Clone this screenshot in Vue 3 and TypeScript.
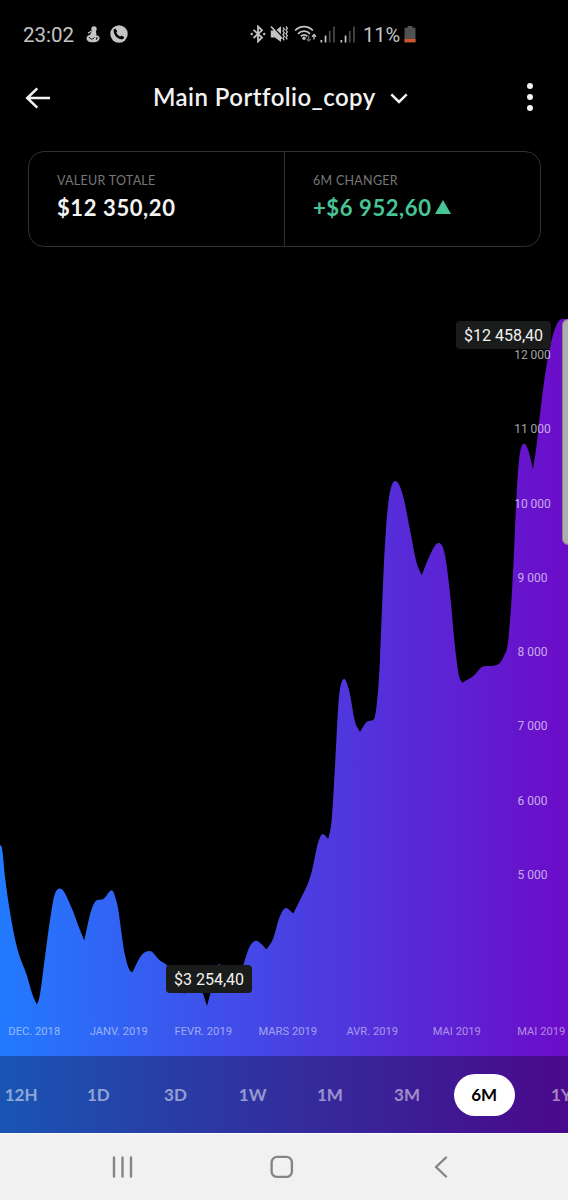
<script setup lang="ts">
type Point = [number, number]

// Portfolio value curve, split at its sharp lows so that each run is smoothed on its own.
const runs: Point[][] = [
  [[0, 845], [1.7, 847], [5, 877], [10, 912], [16.7, 946], [26.7, 975], [33, 996], [37, 1004.5]],
  [[37, 1004.5], [39.5, 997], [43.3, 970], [50, 920], [54.5, 895], [60, 888.5], [71.7, 908], [80, 930], [84.2, 940.5]],
  [[84.2, 940.5], [91.7, 909], [96.7, 900.3], [103.3, 899], [111.7, 890.2], [116.7, 902], [125, 955], [129, 969], [132.3, 972.5]],
  [[132.3, 972.5], [141.7, 955], [149.7, 951], [160, 960.5], [166.7, 965], [184.5, 993.5], [192, 980], [202, 991], [207, 1006]],
  [[207, 1006], [211, 991], [219, 964], [231, 992], [235, 992], [243.3, 965], [249, 948], [256, 940.7], [266.7, 949.3]],
  [[266.7, 949.3], [273, 939], [280, 916], [285.7, 908], [293.3, 913.5]],
  [[293.3, 913.5], [300, 900], [311.7, 871.7], [318.3, 842], [322.5, 834], [328.3, 839]],
  [[328.3, 839], [331.7, 820], [335, 766.7], [339.3, 694], [344.3, 679], [349, 690], [355, 721.7], [360, 732]],
  [[360, 732], [367.3, 721.5], [373.3, 720], [376.7, 705], [380, 660], [383.3, 577], [388.3, 503], [395.5, 481], [403.3, 496.7], [410, 530], [416.7, 563], [421.7, 575.2]],
  [[421.7, 575.2], [430, 555], [438.3, 543], [444.3, 552], [450, 593], [455, 646.7], [459.3, 677], [462.5, 682.7]],
  [[462.5, 682.7], [473.3, 676], [483.3, 666.4], [493.3, 665.8], [504, 656], [508.3, 640], [511.7, 597], [514, 552], [516.7, 493], [520.5, 450], [524.5, 443.7], [528.5, 451], [533, 469.5]],
  [[533, 469.5], [536.7, 444], [541.7, 400], [550, 347], [556, 326], [562, 319], [568, 319]],
]

function smooth(points: Point[]): string {
  const widths = points.slice(1).map((p, i) => p[0] - points[i][0])
  const slopes = points.slice(1).map((p, i) => (p[1] - points[i][1]) / widths[i])
  const tangents = points.map((_, i) => {
    if (i === 0) return slopes[0]
    if (i === points.length - 1) return slopes[i - 1]
    const a = slopes[i - 1]
    const b = slopes[i]
    if (a * b <= 0) return 0
    const mean = (a * widths[i] + b * widths[i - 1]) / (widths[i] + widths[i - 1])
    const limit = 2.6 * Math.min(Math.abs(a), Math.abs(b))
    return Math.sign(mean) * Math.min(Math.abs(mean), limit)
  })
  return points.slice(1).map((p, i) => {
    const q = points[i]
    const h = widths[i] / 3
    return `C${q[0] + h} ${q[1] + h * tangents[i]} ${p[0] - h} ${p[1] - h * tangents[i + 1]} ${p[0]} ${p[1]}`
  }).join('')
}

const area = `M0 1056V845${runs.map(smooth).join('')}V1056Z`

const levels = ['12 000', '11 000', '10 000', '9 000', '8 000', '7 000', '6 000', '5 000']
const months = ['DEC. 2018', 'JANV. 2019', 'FEVR. 2019', 'MARS 2019', 'AVR. 2019', 'MAI 2019', 'MAI 2019']
const periods = ['12H', '1D', '3D', '1W', '1M', '3M', '6M', '1Y']
const active = '6M'
</script>

<template>
  <main class="screen">
    <div class="status">
      <span class="clock">23:02</span>
      <svg class="figure" width="14" height="17" viewBox="0 0 14 17">
        <circle cx="8" cy="3" r="2.700" />
        <path d="M6 5 10 5 10.500 9.500C13 9.500 13.800 11 13.500 13 12.500 15.500 10 16.500 7 16.200 3 16.300.5 14.800.5 12.200.5 10.500 2 9 4 8.800Z" />
        <path d="M2 7.300 5.500 5" stroke="#c4c4c4" stroke-width="1.200" />
        <path class="cut" d="M3 11.200c1.500 2.300 4 2.300 5.500.3M11.300 11l-1 2.800" />
      </svg>
      <svg class="call" width="18" height="18" viewBox="0 0 18 18">
        <circle cx="9" cy="9" r="8.700" />
        <path class="hole" d="M5.200 3.600 7.200 5.900 6.300 7.500c.9 2 2.100 3.100 3.900 4l1.600-1 2.400 1.800c-.6 1.600-1.700 2.300-3.100 2C7.200 13.600 4 9.800 3.600 6.200c-.1-1.200.5-2.100 1.600-2.600Z" />
      </svg>
      <svg class="bt" width="16" height="18" viewBox="0 0 16 18">
        <path class="line" d="M3.500 4.800 12 12.500 8 16.500V1.500L12 5.300 3.500 13" />
        <circle cx="1.700" cy="9" r="1.200" /><circle cx="14.200" cy="9" r="1.200" />
      </svg>
      <svg class="mute" width="18" height="18" viewBox="0 0 18 18">
        <path d="M.8 5.500H4.500L11 12V17L5 12.500H.8Z M6.500 4.800 11 1.300V9.300Z" />
        <path class="line" d="M1 1.500 12 13.500" />
        <path class="line thin" d="M13 2.500l1.300 1.800-1.300 1.800 1.300 1.800-1.300 1.900 1.300 1.800-1.300 1.800 1.300 2M16 1.500l1.300 1.800-1.300 1.800 1.300 1.800-1.300 1.900 1.300 1.800-1.300 1.800 1.300 2" />
      </svg>
      <svg class="wifi" width="24" height="18" viewBox="0 0 24 18">
        <path class="line" d="M1.200 5.500C6 .3 14 .3 18.800 5.500M4 8.800c3.300-3.500 8.800-3.500 12 0M6.800 11.300c1.900-1.900 4.600-1.900 6.500 0" />
        <circle cx="10" cy="13.200" r="1.700" />
        <path class="dim" d="M14.700 10.500v5.500m-2-2 2 2 2-2" />
        <path class="line thin" d="M20 14.500V9.500m-2 2.200 2-2.200 2 2.200" />
      </svg>
      <svg v-for="n in 2" :key="n" class="signal" width="16" height="17" viewBox="0 0 16 17">
        <path d="M.5 14H2.200V16.500H.5ZM4.700 9.500H6.400V16.500H4.700Z" />
        <path class="weak" d="M8.900 5H10.600V16.500H8.900ZM13.100.5H14.800V16.500H13.100Z" />
      </svg>
      <span class="percent">11%</span>
      <svg class="battery" width="12" height="18" viewBox="0 0 12 18">
        <path class="cell" d="M3.500 1H8.500V2.700H11.500V17.300H.5V2.700H3.500Z" />
        <path class="charge" d="M.5 14H11.500V17.300H.5Z" />
      </svg>
    </div>

    <header class="header">
      <svg class="back" width="26" height="22" viewBox="0 0 26 22">
        <path d="M12.300 1.300 2.200 11 12.300 20.700M2.200 11H25" />
      </svg>
      <h1>Main Portfolio_copy</h1>
      <svg class="chevron" width="18" height="11" viewBox="0 0 18 11"><path d="M1.300 1.300 9 9 16.700 1.300" /></svg>
      <svg class="more" width="8" height="30" viewBox="0 0 8 30">
        <circle cx="4" cy="4" r="3" /><circle cx="4" cy="15" r="3" /><circle cx="4" cy="26" r="3" />
      </svg>
    </header>

    <section class="summary">
      <div class="stat">
        <span class="label">VALEUR TOTALE</span>
        <span class="value">$12 350,20</span>
      </div>
      <div class="stat change">
        <span class="label">6M CHANGER</span>
        <span class="value gain">+$6 952,60<svg width="16" height="14" viewBox="0 0 16 14"><path d="M8 0 16 14H0Z" /></svg></span>
      </div>
    </section>

    <section class="chart">
      <svg class="plot" width="568" height="809" viewBox="0 247 568 809">
        <defs>
          <linearGradient id="fill" gradientUnits="userSpaceOnUse" x1="0" y1="0" x2="568" y2="0">
            <stop offset="0" stop-color="#227aff" />
            <stop offset=".5" stop-color="#4842e3" />
            <stop offset="1" stop-color="#6c0cc8" />
          </linearGradient>
        </defs>
        <path :d="area" fill="url(#fill)" />
      </svg>
      <div class="levels"><span v-for="level in levels" :key="level">{{ level }}</span></div>
      <div class="months"><span v-for="(month, i) in months" :key="i">{{ month }}</span></div>
      <span class="tip high">$12 458,40</span>
      <span class="tip low">$3 254,40</span>
      <i class="handle"></i>
    </section>

    <nav class="periods">
      <span v-for="period in periods" :key="period" class="slot">
        <button :class="{ active: period === active }">{{ period }}</button>
      </span>
    </nav>

    <footer class="system">
      <svg width="22" height="22" viewBox="0 0 22 22"><path d="M2 1.500V20.500M10.500 1.500V20.500M19 1.500V20.500" /></svg>
      <svg class="home" width="24" height="24" viewBox="0 0 24 24"><rect x="1.600" y="1.900" width="20.300" height="20" rx="5.500" /></svg>
      <svg width="14" height="22" viewBox="0 0 14 22"><path d="M12 1.500 2 11 12 20.500" /></svg>
    </footer>
  </main>
</template>

<style>
body { background: #000; }
</style>

<style scoped>
.screen {
  width: 568px;
  height: 1200px;
  overflow: hidden;
  display: flex;
  flex-direction: column;
  background: #000;
  color: #f3f3f3;
  font-family: Lato, "Liberation Sans", sans-serif;
}
svg { display: block; flex: none; }

.status {
  height: 68px;
  flex: none;
  box-sizing: border-box;
  display: flex;
  align-items: center;
  padding-left: 23px;
  color: #c4c4c4;
  font: 400 20.5px Roboto, sans-serif;
}
.status svg { fill: #c4c4c4; }
.status .clock { width: 63px; padding-top: 2px; }
.status .line { fill: none; stroke: #c4c4c4; stroke-width: 1.8; }
.status .thin { stroke-width: 1.3; }
.status .dim { fill: none; stroke: #666; stroke-width: 1.3; }
.status .cut { fill: none; stroke: #000; stroke-width: 1; }
.status .hole { fill: #000; }
.status .weak { fill: #4a4a4a; }
.call { margin-left: 10px; }
.bt { margin-left: 122px; }
.mute { margin-left: 4px; }
.wifi { margin-left: 6px; }
.signal { margin-left: 2px; }
.signal + .signal { margin-left: 4px; }
.percent { width: 37px; margin-left: 7px; padding-top: 2px; font-size: 20px; }
.battery { margin-left: 4px; }
.status .cell { fill: #515151; }
.status .charge { fill: #d3532e; }

.header {
  height: 60px;
  flex: none;
  display: flex;
  align-items: center;
  padding-left: 25px;
}
.header svg { fill: none; stroke: #f3f3f3; stroke-width: 2.5; }
h1 {
  width: 224px;
  margin: 0 0 2px 102px;
  font-size: 24px;
  line-height: 30px;
  font-weight: 600;
  letter-spacing: 0.45px;
  white-space: nowrap;
}
.chevron { margin-left: 13px; }
.header .more { margin: 0 0 2px 118px; fill: #f3f3f3; stroke: none; }

.summary {
  width: 513px;
  height: 96px;
  flex: none;
  box-sizing: border-box;
  margin: 23px 0 0 28px;
  display: flex;
  border: 1.5px solid #303030;
  border-radius: 16px;
}
.stat {
  width: 255px;
  box-sizing: border-box;
  padding: 20px 0 0 28px;
  display: flex;
  flex-direction: column;
}
.change { width: 256px; border-left: 1.5px solid #303030; }
.label { font-size: 12.5px; line-height: 18px; letter-spacing: 0.28px; color: #777; white-space: nowrap; }
.value {
  display: flex;
  margin-top: 5px;
  font-size: 22px;
  line-height: 26px;
  font-weight: 700;
  letter-spacing: 0.6px;
  white-space: nowrap;
}
.gain { color: #48c597; }
.gain svg { margin: 5px 0 0 3px; fill: #48c597; }

.chart { position: relative; height: 809px; flex: none; }
.levels {
  position: absolute;
  top: 71px;
  right: 0;
  width: 71px;
  color: rgb(255 255 255 / 65%);
  font: 12px Roboto, sans-serif;
  text-align: center;
}
.levels span { display: block; height: 74.3px; line-height: 74.3px; }
.months {
  position: absolute;
  left: -8px;
  bottom: 14px;
  display: flex;
  color: rgb(255 255 255 / 50%);
  font: 11.2px/20px Roboto, sans-serif;
}
.months span { width: 84.5px; text-align: center; white-space: nowrap; }
.tip {
  position: absolute;
  box-sizing: border-box;
  height: 28px;
  border-radius: 4px;
  background: #1a1b1b;
  color: #f2f2f2;
  font: 16px/29px Roboto, sans-serif;
  text-align: center;
  white-space: nowrap;
}
.high { left: 456px; top: 74px; width: 95px; }
.low { left: 166px; top: 718px; width: 86px; }
.handle {
  position: absolute;
  top: 72px;
  right: -6px;
  width: 12px;
  height: 226px;
  box-sizing: border-box;
  border: 1px solid #858585;
  border-radius: 6px;
  background: #adadab;
}

.periods {
  height: 77px;
  flex: none;
  display: flex;
  align-items: center;
  background: linear-gradient(90deg, #1955b3, #322e9e 50%, #4a088b);
}
.slot { width: 77.2px; flex: none; display: flex; justify-content: center; }
.slot:first-child { margin-left: -17.500px; }
.periods button {
  width: 61px;
  height: 42px;
  padding: 0;
  border: 0;
  border-radius: 21px;
  background: none;
  color: rgb(255 255 255 / 50%);
  font: 700 17px Lato, sans-serif;
}
.periods .active { background: #fff; color: #000; }

.system {
  height: 67px;
  flex: none;
  box-sizing: border-box;
  padding: 0 120px 0 112px;
  display: flex;
  align-items: center;
  justify-content: space-between;
  border-top: 1px solid #fff;
  background: #f1f1f1;
}
.home { margin-right: 5px; }
.system svg { fill: none; stroke: #858585; stroke-width: 2.4; stroke-linecap: round; stroke-linejoin: round; }
</style>
